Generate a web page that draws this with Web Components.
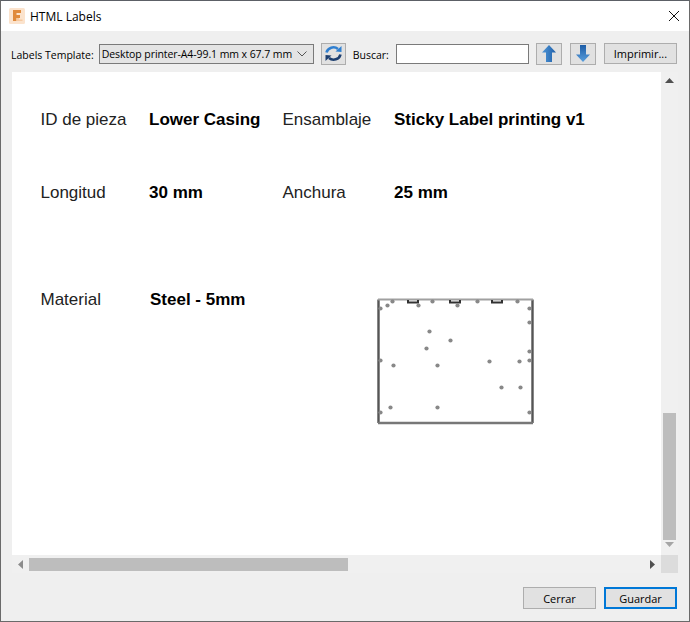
<!DOCTYPE html>
<html>
<head>
<meta charset="utf-8">
<title>HTML Labels</title>
<style>
  html, body { margin: 0; padding: 0; width: 690px; height: 622px; overflow: hidden; background: #efefef; }
</style>
</head>
<body>
<label-dialog>
  <title-bar slot="title">HTML Labels</title-bar>
  <tool-bar slot="tools"></tool-bar>
  <scroll-pane slot="pane"><label-sheet></label-sheet></scroll-pane>
  <div slot="footer" style="display:flex;gap:8px">
    <ui-button w="73" h="22">Cerrar</ui-button>
    <ui-button w="73" h="22" primary>Guardar</ui-button>
  </div>
</label-dialog>

<script>
  class LabelDialog extends HTMLElement {
    constructor() {
      super();
      this.attachShadow({ mode: "open" });
      this.shadowRoot.innerHTML = `
        <style>
          :host { display: flex; flex-direction: column; width: 690px; height: 622px; box-sizing: border-box;
            border-top: 1px solid #5c6066; border-left: 1px solid #6a6a6a; border-right: 1px solid #6a6a6a; border-bottom: 1px solid #6a6a6a;
            background: #efefef; font-family: "Liberation Sans", Arial, sans-serif; color: #000; }
          .pane { flex: 1; min-height: 0; display: flex; padding: 0 11px 0 11px; }
          .foot { display: flex; justify-content: flex-end; padding: 14px 12px 12px 0; }
        </style>
        <slot name="title"></slot>
        <slot name="tools"></slot>
        <div class="pane"><slot name="pane"></slot></div>
        <div class="foot"><slot name="footer"></slot></div>
      `;
    }
  }

  class TitleBar extends HTMLElement {
    constructor() {
      super();
      this.attachShadow({ mode: "open" });
      this.shadowRoot.innerHTML = `
        <style>
          :host { display: flex; align-items: center; height: 30px; flex: none; background: #fff; box-sizing: border-box; padding: 0 9px 0 8px; }
          .txt { margin-left: 5px; font: 12px "Open Sans", "Liberation Sans", sans-serif; flex: 1; color: #000; }
          svg { display: block; }
        </style>
        <svg width="16" height="16" viewBox="0 0 16 16">
          <rect width="16" height="16" rx="1.5" fill="#fbe3cd"/>
          <path d="M4 2h8v3H7.500v2H11v3H7.500v3H4z" fill="#e08a3c"/>
          <path d="M7.500 10v3h6v-1.500H10V10z" fill="#f6c9a0"/>
        </svg>
        <span class="txt"><slot></slot></span>
        <svg width="12" height="12" viewBox="0 0 12 12"><path d="M1 1l10 10M11 1L1 11" stroke="#111" stroke-width="1" fill="none"/></svg>
      `;
    }
  }

  class UiButton extends HTMLElement {
    constructor() {
      super();
      this.attachShadow({ mode: "open" });
      const w = this.getAttribute("w") || 73;
      const h = this.getAttribute("h") || 22;
      const primary = this.hasAttribute("primary");
      this.shadowRoot.innerHTML = `
        <style>
          :host { display: flex; align-items: center; justify-content: center; flex: none; box-sizing: border-box;
            width: ${w}px; height: ${h}px; background: #e1e1e1;
            border: ${primary ? "2px solid #0078d7" : "1px solid #adadad"};
            font: 11px "Open Sans", "Liberation Sans", sans-serif; color: #000; }
        </style>
        <slot></slot>
      `;
    }
  }

  class ToolBar extends HTMLElement {
    constructor() {
      super();
      this.attachShadow({ mode: "open" });
      this.shadowRoot.innerHTML = `
        <style>
          :host { display: flex; align-items: center; flex: none; height: 41px; box-sizing: border-box; padding: 4px 12px 0 10px;
            font: 10.5px "Open Sans", "Liberation Sans", sans-serif; color: #000; }
          .select { display: flex; align-items: center; box-sizing: border-box; width: 215px; height: 20px; margin-left: 5px;
            background: #e4e4e4; border: 1px solid #7a7a7a; padding: 1px 6px 0 2px; white-space: nowrap; letter-spacing: -.08px; }
          .select span { flex: 1; }
          .input { box-sizing: border-box; width: 133px; height: 20px; margin-left: 7px; background: #fff; border: 1px solid #7a7a7a; }
          .lbl { white-space: nowrap; padding-top: 2px; }
          svg { display: block; }
        </style>
        <span class="lbl">Labels Template:</span>
        <div class="select"><span>Desktop printer-A4-99.1 mm x 67.7 mm</span>
          <svg width="10" height="6" viewBox="0 0 10 6"><path d="M.5.500L5 5 9.500.500" stroke="#555" fill="none"/></svg>
        </div>
        <ui-button w="25" h="22" style="margin-left:7px">
          <svg width="19" height="17" viewBox="0 0 19 17">
            <path d="M2.500 7.500A7 6.500 0 0 1 14 4" stroke="#2f7fd0" stroke-width="2.600" fill="none"/>
            <path d="M11.500 6.500L17.500 7V1z" fill="#2f7fd0"/>
            <path d="M16.500 9.500A7 6.500 0 0 1 5 13" stroke="#1d3f70" stroke-width="2.600" fill="none"/>
            <path d="M7.500 10.500L1.500 10v6z" fill="#1d3f70"/>
          </svg>
        </ui-button>
        <span class="lbl" style="margin-left:7px">Buscar:</span>
        <div class="input"></div>
        <ui-button w="26" h="22" style="margin-left:7px">
          <svg width="14" height="17" viewBox="0 0 14 17"><defs><linearGradient id="a" x1="0" x2="1" y1="0" y2="0"><stop offset="0" stop-color="#4f96d8"/><stop offset="1" stop-color="#1f5fa8"/></linearGradient></defs><path d="M7 0l7 7.500H10V17H4V7.500H0z" fill="url(#a)"/></svg>
        </ui-button>
        <ui-button w="26" h="22" style="margin-left:8px">
          <svg width="14" height="17" viewBox="0 0 14 17"><defs><linearGradient id="b" x1="0" x2="0" y1="0" y2="1"><stop offset="0" stop-color="#1d5ca6"/><stop offset="1" stop-color="#5a9fdd"/></linearGradient></defs><path d="M4 0h6v9.500h4L7 17 0 9.500h4z" fill="url(#b)"/></svg>
        </ui-button>
        <ui-button w="73" h="21" style="margin-left:8px;margin-top:-1px">Imprimir...</ui-button>
      `;
    }
  }

  class ScrollPane extends HTMLElement {
    constructor() {
      super();
      this.attachShadow({ mode: "open" });
      this.shadowRoot.innerHTML = `
        <style>
          :host { flex: 1; display: grid; grid-template-columns: 1fr 17px; grid-template-rows: 483px 18px; min-width: 0; }
          .view { background: #fff; overflow: hidden; }
          .v { background: #f0f0f0; display: flex; flex-direction: column; align-items: center; }
          .h { background: #f0f0f0; display: flex; align-items: center; }
          .corner { background: #dcdcdc; }
          .gap { flex: 1; }
          .vt { width: 13px; height: 127px; background: #bdbdbd; }
          .ht { width: 319px; height: 13px; background: #bdbdbd; }
          svg { display: block; flex: none; }
        </style>
        <div class="view"><slot></slot></div>
        <div class="v">
          <svg style="margin-top:6px" width="9" height="5" viewBox="0 0 9 5"><path d="M4.500 0L9 5H0z" fill="#505050"/></svg>
          <div class="gap"></div>
          <div class="vt"></div>
          <svg style="margin:2px 0 8px" width="9" height="5" viewBox="0 0 9 5"><path d="M0 0h9L4.500 5z" fill="#a5a5a5"/></svg>
        </div>
        <div class="h">
          <svg style="margin-left:6px" width="5" height="9" viewBox="0 0 5 9"><path d="M5 0v9L0 4.500z" fill="#8c8c8c"/></svg>
          <div class="ht" style="margin-left:6px"></div>
          <div class="gap"></div>
          <svg style="margin-right:6px" width="5" height="9" viewBox="0 0 5 9"><path d="M0 0l5 4.500L0 9z" fill="#505050"/></svg>
        </div>
        <div class="corner"></div>
      `;
    }
  }

  class PartOutline extends HTMLElement {
    constructor() {
      super();
      this.attachShadow({ mode: "open" });
      // holes: [x, y] in plate coordinates, soft dots like the downscaled bitmap
      const holes = [[52,33],[73,42],[49,50],[16,67],[60,67],[112,63],[142,63],[124,89],[143,89],[13,109],[60,109],
        [3,10],[10,7],[3,62],[3,114],[152,10],[152,24],[152,53],[152,62],[152,114],
        [15,3],[41,7],[55,3],[80,7],[100,3],[140,3]];
      const dots = holes.map(([x, y]) => `<circle cx="${x + .5}" cy="${y + .5}" r="2.1" fill="#888"/>`).join("");
      this.shadowRoot.innerHTML = `
        <style>
          :host { display: block; width: 157px; height: 127px; }
          svg { display: block; }
        </style>
        <svg width="157" height="127" viewBox="0 0 157 127">
          <defs><filter id="soft" x="-5%" y="-5%" width="110%" height="110%"><feGaussianBlur stdDeviation=".6"/></filter></defs>
          <g filter="url(#soft)">
            <path d="M1.500 125V1.500M155.500 1.500V125" stroke="#555" stroke-width="2.400" fill="none"/>
            <path d="M1 1.500H156" stroke="#a0a0a0" stroke-width="2.200" fill="none"/>
            <path d="M1 125H156" stroke="#777" stroke-width="2.400" fill="none"/>
            <path d="M31 2v2.500h10V2M73 2v2.500h10V2M115 2v2.500h10V2" stroke="#333" stroke-width="2" fill="none"/>
            ${dots}
          </g>
        </svg>
      `;
    }
  }

  class LabelSheet extends HTMLElement {
    constructor() {
      super();
      this.attachShadow({ mode: "open" });
      this.shadowRoot.innerHTML = `
        <style>
          :host { display: block; font: 17px "Liberation Sans", Arial, sans-serif; color: #222; padding: 38px 0 0 28.5px; }
          .grid { display: grid; grid-template-columns: 108.5px 133.5px 111.5px auto; align-items: center; }
          .r1 { grid-auto-rows: 20px; margin-bottom: 53px; }
          b { font-weight: bold; color: #000; white-space: nowrap; }
          .last { display: flex; margin-top: 87px; align-items: flex-start; }
          .mat { width: 109.5px; line-height: 20px; }
          .val { width: 227px; line-height: 20px; }
          part-outline { margin-top: 8px; }
        </style>
        <div class="grid r1">
          <span>ID de pieza</span><b>Lower Casing</b><span>Ensamblaje</span><b>Sticky Label printing v1</b>
        </div>
        <div class="grid r1" style="margin:0">
          <span>Longitud</span><b>30 mm</b><span>Anchura</span><b>25 mm</b>
        </div>
        <div class="last">
          <span class="mat">Material</span><b class="val">Steel - 5mm</b><part-outline></part-outline>
        </div>
      `;
    }
  }

  customElements.define("ui-button", UiButton);
  customElements.define("title-bar", TitleBar);
  customElements.define("tool-bar", ToolBar);
  customElements.define("scroll-pane", ScrollPane);
  customElements.define("part-outline", PartOutline);
  customElements.define("label-sheet", LabelSheet);
  customElements.define("label-dialog", LabelDialog);
</script>
</body>
</html>
